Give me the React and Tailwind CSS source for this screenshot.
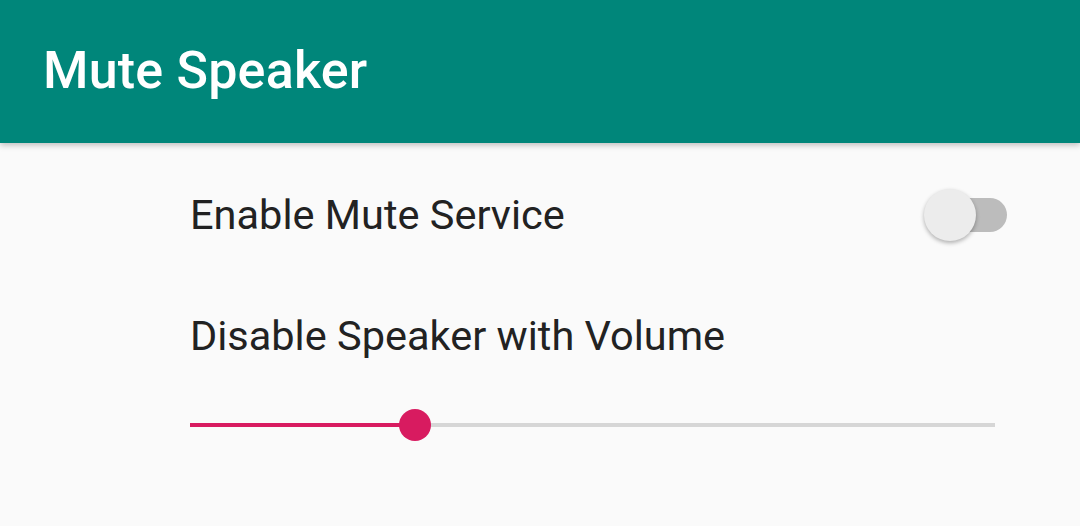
export default function App() {
  const value = 28

  return (
    <div className="w-[1080px] h-[526px] bg-[#fafafa] overflow-hidden flex flex-col" style={{ fontFamily: 'Roboto, sans-serif' }}>
      {/* App bar */}
      <header className="relative z-10 h-[143px] shrink-0 bg-[#00867a] flex items-center pl-[43px] shadow-[0_2px_6px_rgba(0,0,0,0.25)]">
        <h1 className="text-white text-[52px] font-medium tracking-[0.2px] leading-none pb-[2px]">Mute Speaker</h1>
      </header>

      <div className="flex flex-col pl-[190px] pr-[73px]">
        {/* Switch row */}
        <div className="flex items-center justify-between h-[146px] pb-[2px]">
          <span className="text-[#222] text-[41.5px] leading-none">Enable Mute Service</span>
          <div className="flex items-center w-[83px]">
            <div className="relative z-10 w-[52px] h-[52px] shrink-0 rounded-full bg-[#ececec] shadow-[0_2px_4px_rgba(0,0,0,0.3)]" />
            <div className="flex-1 h-[34px] -ml-[44px] rounded-full bg-[#bcbcbc]" />
          </div>
        </div>

        {/* Slider label */}
        <div className="text-[#222] text-[41.5px] leading-none mt-[26px]">Disable Speaker with Volume</div>

        {/* Slider */}
        <div className="flex items-center h-[32px] mt-[52px] mr-[12px]">
          <div className="h-[4px] bg-[#d81b60]" style={{ width: `${value}%` }} />
          <div className="relative z-10 w-[32px] h-[32px] shrink-0 -mx-[16px] rounded-full bg-[#d81b60]" />
          <div className="flex-1 h-[4px] bg-[#d6d6d6]" />
        </div>
      </div>
    </div>
  )
}
